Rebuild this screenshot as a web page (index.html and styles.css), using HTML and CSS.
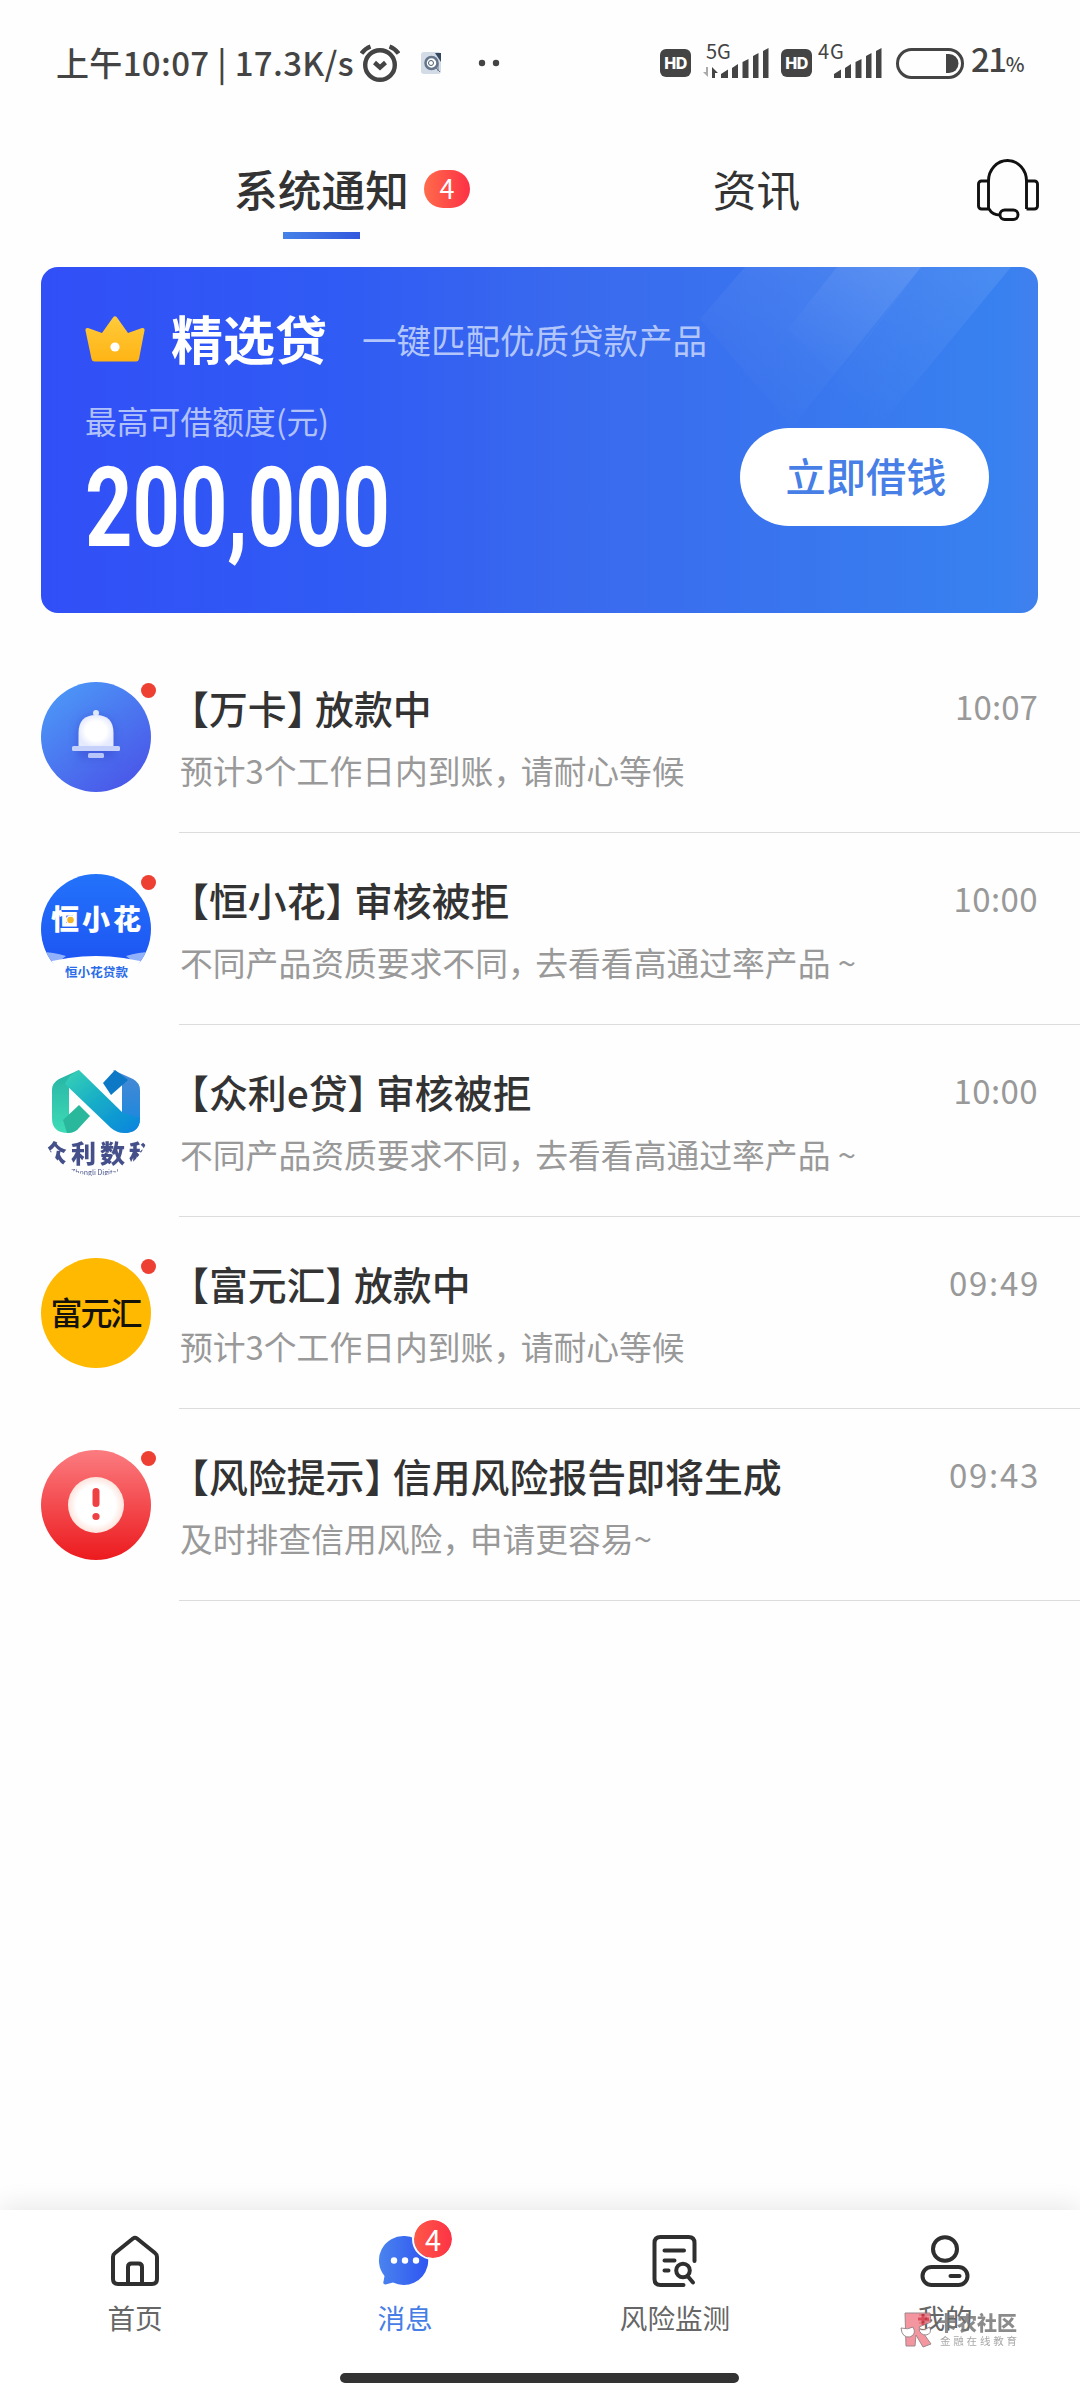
FILE: index.html
```html
<!DOCTYPE html>
<html lang="zh-CN">
<head>
<meta charset="utf-8">
<title>消息</title>
<link rel="stylesheet" href="styles.css">
</head>
<body>
<div class="screen">
  <header class="status">
    <span class="status-time">上午10:07 | 17.3K/s</span>
    <svg class="ic-alarm" width="40" height="38" viewBox="0 0 40 38" fill="none" stroke="#444" stroke-width="4.400">
      <circle cx="20" cy="21" r="14.800"/><path d="M14.500 18.500l5.500 5 5.500-5"/><path d="M1.500 9.500Q5 4.500 10.500 2.500M38.500 9.500Q35 4.500 29.500 2.500"/>
    </svg>
    <svg class="ic-app" width="21" height="22" viewBox="0 0 21 22">
      <rect width="20" height="22" rx="3" fill="#d3dbe7"/><path d="M14 1h6v9z" fill="#34475f"/><circle cx="10.500" cy="11" r="6" fill="#fff" stroke="#64748b" stroke-width="2.500"/><circle cx="10" cy="11" r="2.500" fill="none" stroke="#4a5b74"/><path d="M14 15l5 5M17 11v8" stroke="#64748b"/>
    </svg>
    <svg class="ic-dots" width="22" height="8" viewBox="0 0 22 8" fill="#444"><circle cx="4" cy="4" r="3.200"/><circle cx="18" cy="4" r="3.200"/></svg>
    <span class="hd hd-first">HD</span>
    <span class="net net-5g">5G</span>
    <svg class="bars bars-5g" width="66" height="32" viewBox="0 0 66 32" fill="#444">
      <path d="M5 20v10L0 25h3v-5z" fill="#aaa"/><path d="M9 31V20l6 6h-3v5z"/>
      <path d="M18 31v-4l7-4.500V31zM29 31V21l6-4v14zM39.500 31V15l6-3v19zM50 31V9l5.500-3v25zM60 31V4l5.500-3v30z"/>
    </svg>
    <span class="hd hd-second">HD</span>
    <span class="net net-4g">4G</span>
    <svg class="bars bars-4g" width="48" height="32" viewBox="0 0 48 32" fill="#444">
      <path d="M0 31v-4l7-4.500V31zM11 31V21l6-4v14zM21.500 31V15l6-3v19zM32 31V9l5.500-3v25zM42 31V4l5.500-3v30z"/>
    </svg>
    <svg class="battery" width="68" height="31" viewBox="0 0 68 31">
      <rect x="1.500" y="1.500" width="65" height="28" rx="14" fill="none" stroke="#444" stroke-width="3"/><path d="M50 6h3a9.500 9.500 0 0 1 0 19h-3z" fill="#444"/>
    </svg>
    <span class="pct">21<small>%</small></span>
  </header>

  <nav class="tabs">
    <div class="tab tab-on"><span class="tab-text">系统通知</span><i class="tab-line"></i><b class="tab-badge">4</b></div>
    <div class="tab"><span class="tab-text">资讯</span></div>
    <svg class="headset" width="62" height="62" viewBox="0 0 62 62" fill="none" stroke="#111" stroke-width="2.900">
      <path d="M49.500 50V22a19 20.500 0 0 0-38 0v28M49.500 50h8a3 3 0 0 0 3-3V25a3 3 0 0 0-3-3h-8"/>
      <path d="M12 22H4.500a3 3 0 0 0-3 3v22a3 3 0 0 0 3 3H12c2 3.500 6 6 11 6"/>
      <rect x="23" y="51" width="18" height="9.500" rx="4.700"/>
    </svg>
  </nav>

  <section class="banner">
    <svg class="banner-art" width="997" height="346" viewBox="0 0 997 346">
      <defs>
        <linearGradient id="ray" x1="1" y1="0" x2="0.300" y2="1"><stop offset="0" stop-color="#fff" stop-opacity=".09"/><stop offset="1" stop-color="#fff" stop-opacity="0"/></linearGradient>
      </defs>
      <path d="M704 0L659 52 751 160 880 0z" fill="url(#ray)"/>
      <path d="M796 0L747 62 796 112 880 0z" fill="url(#ray)"/>
      <path d="M880 0L781 130 838 160 970 0z" fill="url(#ray)"/>
    </svg>
    <div class="banner-head">
      <svg class="crown" width="60" height="46" viewBox="0 0 60 46">
        <defs><linearGradient id="gold" x1="0" y1="0" x2="0" y2="1"><stop offset="0" stop-color="#ffcb3b"/><stop offset="1" stop-color="#ffb414"/></linearGradient></defs>
        <path d="M28 1.500q2-2.500 4 0L43 17l14-5q3-.5 2.500 2.500L54 43q-.6 2.500-3 2.500H9.500q-2.400 0-3-2.500L.5 14.500Q0 11.500 3 12l14 5z" fill="url(#gold)"/><circle cx="30" cy="31" r="4.600" fill="#fff"/>
      </svg>
      <h1>精选贷</h1>
      <span class="slogan">一键匹配优质贷款产品</span>
    </div>
    <div class="banner-main">
      <div>
        <div class="limit-label">最高可借额度(元)</div>
        <div class="limit">200,000</div>
      </div>
      <button class="borrow">立即借钱</button>
    </div>
  </section>

  <ul class="list">
    <li class="row">
      <div class="avatar">
        <svg width="110" height="110" viewBox="0 0 110 110">
          <defs>
            <linearGradient id="bellbg" x1="0.100" y1="0.100" x2="0.800" y2="1"><stop offset="0" stop-color="#4c96f7"/><stop offset="1" stop-color="#4a55e8"/></linearGradient>
            <radialGradient id="bellw"><stop offset=".6" stop-color="#fff"/><stop offset="1" stop-color="#e6eafd"/></radialGradient>
            <filter id="glow" x="-50%" y="-50%" width="200%" height="200%"><feGaussianBlur stdDeviation="5"/></filter>
          </defs>
          <circle cx="55" cy="55" r="55" fill="url(#bellbg)"/>
          <path d="M37 69V52q0-18 18-18t18 18v24H37z" fill="#3848cf" opacity=".55" filter="url(#glow)"/>
          <circle cx="55" cy="31" r="3" fill="#dfe7fd"/>
          <path d="M37.500 65V51q0-18 17.500-18t17.500 18v14z" fill="url(#bellw)"/>
          <rect x="31" y="64" width="48" height="5" rx="1.500" fill="#c5d1fb"/><rect x="47" y="71" width="16" height="5" rx="1.500" fill="#b7c5fa"/>
        </svg>
        <i class="dot"></i>
      </div>
      <div class="body">
        <div class="line"><h2>【万卡<span class="close">】</span>放款中</h2><time class="seven">10:07</time></div>
        <p>预计3个工作日内到账<span class="comma">，</span>请耐心等候</p>
      </div>
    </li>
    <li class="row">
      <div class="avatar">
        <svg width="110" height="110" viewBox="0 0 110 110">
          <defs>
            <clipPath id="round"><circle cx="55" cy="55" r="55"/></clipPath>
            <linearGradient id="hxh" x1="0" y1="0" x2="0" y2="1"><stop offset="0" stop-color="#2373fb"/><stop offset="1" stop-color="#1d55f3"/></linearGradient>
          </defs>
          <g clip-path="url(#round)"><rect width="110" height="88" fill="url(#hxh)"/><path d="M0 78q12 0 25 4l-10 8H0zM110 78q-12 0-25 4l10 8h15z" fill="#91b2fb"/><path d="M0 90Q55 74 110 90v20H0z" fill="#fff"/></g>
          <text x="10" y="56" textLength="90" class="logo-hxh">恒小花</text>
          <circle cx="29.500" cy="46" r="4" fill="#f2b42b" stroke="#fff" stroke-width="1.500"/>
          <text x="24" y="102.500" textLength="63" class="logo-hxh-sub">恒小花贷款</text>
        </svg>
        <i class="dot"></i>
      </div>
      <div class="body">
        <div class="line"><h2>【恒小花<span class="close">】</span>审核被拒</h2><time>10:00</time></div>
        <p>不同产品资质要求不同<span class="comma">，</span>去看看高通过率产品 ~</p>
      </div>
    </li>
    <li class="row">
      <div class="avatar">
        <svg width="110" height="110" viewBox="0 0 110 110">
          <defs>
            <linearGradient id="nleft" x1="0" y1="0" x2="0" y2="1"><stop offset="0" stop-color="#27b3a5"/><stop offset="1" stop-color="#3edcb6"/></linearGradient>
            <linearGradient id="nmid" x1="0" y1="0" x2="1" y2="1"><stop offset="0" stop-color="#39d3b4"/><stop offset=".5" stop-color="#14a9c9"/><stop offset="1" stop-color="#0b82df"/></linearGradient>
            <linearGradient id="nright" x1="0" y1="0" x2="0" y2="1"><stop offset="0" stop-color="#4a89d3"/><stop offset="1" stop-color="#1488e0"/></linearGradient>
            <filter id="soft"><feGaussianBlur stdDeviation=".7"/></filter>
          </defs>
          <g filter="url(#soft)">
            <path d="M38 4L18 13q-7 4-7 11v28q0 15 16 15 6 0 10-4L28 50V22z" fill="url(#nleft)"/>
            <path d="M38 39l11 11-12 13q-4 4-11 4L22 54z" fill="#2bb89d"/>
            <path d="M72 4l20 9q7 4 7 11v28q0 15-16 15l-2-20V18z" fill="url(#nright)"/>
            <path d="M62 17L74 4l13 10-17 15z" fill="#0878c5"/>
            <path d="M38 4q-10 4-14 14l46 44q6 5 13 5 16 0 16-15L82 47z" fill="url(#nmid)"/>
          </g>
          <g clip-path="url(#round)" class="logo-zl" filter="url(#soft)">
            <text x="1" y="97" textLength="112">众利数科</text>
            <text x="30" y="109" class="logo-zl-en">Zhongli Digital</text>
          </g>
        </svg>
      </div>
      <div class="body">
        <div class="line"><h2>【众利e贷<span class="close">】</span>审核被拒</h2><time>10:00</time></div>
        <p>不同产品资质要求不同<span class="comma">，</span>去看看高通过率产品 ~</p>
      </div>
    </li>
    <li class="row">
      <div class="avatar">
        <svg width="110" height="110" viewBox="0 0 110 110">
          <circle cx="55" cy="55" r="55" fill="#ffb900"/>
          <text x="9.500" y="67" textLength="92" class="logo-fyh">富元汇</text>
        </svg>
        <i class="dot"></i>
      </div>
      <div class="body">
        <div class="line"><h2>【富元汇<span class="close">】</span>放款中</h2><time class="wide">09:49</time></div>
        <p>预计3个工作日内到账<span class="comma">，</span>请耐心等候</p>
      </div>
    </li>
    <li class="row">
      <div class="avatar">
        <svg width="110" height="110" viewBox="0 0 110 110">
          <defs>
            <linearGradient id="riskbg" x1="0" y1="0" x2="0" y2="1"><stop offset="0" stop-color="#fb7c80"/><stop offset="1" stop-color="#ec1a1e"/></linearGradient>
            <radialGradient id="riskw"><stop offset=".7" stop-color="#fff"/><stop offset="1" stop-color="#fde3dc"/></radialGradient>
          </defs>
          <circle cx="55" cy="55" r="55" fill="url(#riskbg)"/><circle cx="55" cy="55" r="28" fill="url(#riskw)"/>
          <rect x="51.500" y="38" width="7" height="19" rx="3.500" fill="#ef4143"/><circle cx="55" cy="66.500" r="3.600" fill="#ef4143"/>
        </svg>
        <i class="dot"></i>
      </div>
      <div class="body">
        <div class="line"><h2>【风险提示<span class="close">】</span>信用风险报告即将生成</h2><time class="wide">09:43</time></div>
        <p>及时排查信用风险<span class="comma">，</span>申请更容易~</p>
      </div>
    </li>
  </ul>

  <footer class="dock">
    <div class="dock-items">
      <div class="item">
        <svg width="56" height="56" viewBox="0 0 56 56" fill="none" stroke="#2f2f2f" stroke-width="4" stroke-linejoin="round">
          <path d="M26 5.500q2-1.500 4 0L48 20q2 1.500 2 4v22q0 5-5 5H11q-5 0-5-5V24q0-2.500 2-4z"/><path d="M21 51V34q0-3.500 3.500-3.500h7Q35 30.500 35 34v17"/>
        </svg>
        <span>首页</span>
      </div>
      <div class="item item-on">
        <svg width="56" height="56" viewBox="0 0 56 56">
          <defs><linearGradient id="chat"><stop offset="0" stop-color="#4a84ee"/><stop offset="1" stop-color="#2f55f2"/></linearGradient></defs>
          <path d="M28 3a24.500 24.500 0 1 1-12 46.500L8.500 51.500q-3 0-2-3L7.500 43A24.500 24.500 0 0 1 28 3z" fill="url(#chat)"/>
          <g fill="#fff"><circle cx="17" cy="27.500" r="3.200"/><circle cx="28" cy="27.500" r="3.200"/><circle cx="39" cy="27.500" r="3.200"/></g>
        </svg>
        <b class="item-badge">4</b>
        <span>消息</span>
      </div>
      <div class="item">
        <svg width="56" height="56" viewBox="0 0 56 56" fill="none" stroke="#2f2f2f" stroke-width="4" stroke-linecap="round">
          <path d="M47.500 28V10q0-6-6-6H13.500q-6 0-6 6v36q0 6 6 6h23"/><path d="M17.500 17.500h19.500M17.500 27.500h10M17.500 37.500h4"/><circle cx="36" cy="37.500" r="6.800"/><path d="M40.500 43l5.500 6.500"/>
        </svg>
        <span>风险监测</span>
      </div>
      <div class="item">
        <svg width="56" height="56" viewBox="0 0 56 56" fill="none" stroke="#2f2f2f" stroke-width="4" stroke-linecap="round">
          <ellipse cx="28" cy="16" rx="12" ry="11.800"/><rect x="5.500" y="34" width="45" height="18" rx="9"/><path d="M33.500 43h9"/>
        </svg>
        <span>我的</span>
        <div class="mark">
          <svg width="34" height="36" viewBox="0 0 34 36" stroke="#8b7377">
            <path d="M5 1h25l1 9-12 5 12 17-8 3-7-12-1 11H6z" fill="#f38490"/><path d="M23 2v11M18 7h11" stroke="#d32f3f" stroke-width="3"/>
            <path d="M1 16q7 2 12-1 4 7-3 10-8 1-9-9zM19 17q5 2 11-2 2 7-4 8-6 0-7-6z" fill="#fff"/>
          </svg>
          <div class="mark-text"><b>卡农社区</b><em>金融在线教育</em></div>
        </div>
      </div>
    </div>
    <i class="home-bar"></i>
  </footer>
</div>
</body>
</html>
```
FILE: styles.css
```css
* { box-sizing: border-box; }
body, h1, h2, p, ul { margin: 0; padding: 0; }
body { background: #fefefe; font-family: "Noto Sans CJK SC", sans-serif; color: #333; }
svg { display: block; flex: none; }
i, em { font-style: normal; }
.screen { width: 1080px; height: 2400px; display: flex; flex-direction: column; overflow: hidden; }

/* status bar */
.status { height: 126px; padding: 0 0 0 56px; display: flex; align-items: center; color: #444; white-space: nowrap; flex: none; }
.status-time { width: 304px; font-size: 33px; line-height: 48px; font-weight: 500; letter-spacing: .35px; margin-top: -3px; }
.ic-app { margin-left: 21px; }
.ic-dots { margin-left: 36px; }
.hd { width: 31px; height: 28px; border-radius: 6px; background: #444; color: #fff; font: 800 16px/28px Inter, sans-serif; text-align: center; letter-spacing: -.5px; }
.hd-first { margin-left: 160px; }
.hd-second { margin-left: 12px; }
.net { font-size: 20px; line-height: 20px; width: 28px; margin-top: -25px; }
.net-5g { margin-left: 15px; }
.net-4g { margin-left: 6px; letter-spacing: .8px; }
.bars-5g { margin-left: -31px; }
.bars-4g { margin-left: -12px; }
.battery { margin-left: 14px; }
.pct { font-size: 33px; line-height: 40px; font-weight: 500; margin-left: 7px; margin-top: -4px; letter-spacing: -1.500px; }
.pct small { font-size: 20px; letter-spacing: 0; }

/* tabs */
.tabs { height: 141px; flex: none; display: flex; align-items: flex-start; padding-left: 104px; }
.tab { position: relative; width: 435px; height: 113px; display: flex; flex-direction: column; align-items: center; font-size: 43.700px; line-height: 64px; padding-top: 30px; }
.tab-on { font-weight: 500; }
.tab-line { width: 77px; height: 7px; margin-top: 12px; background: linear-gradient(90deg, #4582e8, #3358dd); }
.tab-badge { position: absolute; left: 320px; top: 44px; width: 46px; height: 38px; border-radius: 19px; background: linear-gradient(90deg, #ff6b4b, #fd3145); color: #fff; font-size: 27px; line-height: 36px; font-weight: 400; text-align: center; }
.headset { margin: 33px 0 0 3px; }

/* banner */
.banner { position: relative; width: 997px; height: 346px; margin-left: 41px; padding: 37px 49px 0 44px; border-radius: 17px; overflow: hidden; flex: none; background: linear-gradient(90deg, #314ff7 0%, #305bf4 30%, #3969ee 52%, #3975ee 75%, #3881f0 96%, #4080ee 100%); color: #fff; }
.banner-art { position: absolute; left: 0; top: 0; }
.banner-head { position: relative; display: flex; align-items: center; height: 68px; }
.crown { margin-top: 2px; }
h1 { font-size: 52px; line-height: 68px; font-weight: 700; margin-left: 26px; }
.slogan { font-size: 34.500px; line-height: 50px; margin: 2px 0 0 35px; color: #b3c6fb; }
.banner-main { position: relative; display: flex; justify-content: space-between; align-items: flex-start; }
.limit-label { font-size: 31.800px; line-height: 46px; margin-top: 25px; color: #b1c2fb; }
.limit { font: 700 111px/100px Roboto, sans-serif; margin-top: 15px; transform: scaleX(.745); transform-origin: 0 50%; white-space: nowrap; width: 300px; }
.borrow { width: 249px; height: 98px; margin-top: 56px; border: 0; border-radius: 49px; background: #fff; color: #477fe6; font: 500 40.200px/94px "Noto Sans CJK SC", sans-serif; padding: 0 0 4px 3px; text-align: center; }

/* messages */
.list { list-style: none; margin-top: 28px; padding-left: 41px; flex: 1; }
.row { display: flex; height: 192px; }
.avatar { position: relative; width: 110px; margin-top: 41px; flex: none; }
.dot { position: absolute; left: 100px; top: 1px; width: 15px; height: 15px; border-radius: 50%; background: #ee3f33; }
.body { flex: 1; margin-left: 28px; padding: 42px 42px 0 0; border-bottom: 1px solid #dcdcdc; }
.line { display: flex; justify-content: space-between; align-items: flex-start; height: 48px; }
h2 { font-size: 38.900px; line-height: 48px; font-weight: 500; margin-left: -9px; white-space: nowrap; }
.close { letter-spacing: -10.500px; }
time { font-size: 33px; line-height: 47px; color: #999; letter-spacing: .4px; }
.seven { letter-spacing: .1px; }
.wide { letter-spacing: 1.700px; margin-right: -2px; }
.body p { font-size: 32.800px; line-height: 44px; margin-top: 17px; margin-left: 1px; color: #999; white-space: nowrap; }
.comma { letter-spacing: -5.500px; }
.logo-hxh { font-size: 28px; font-weight: 900; fill: #fff; }
.logo-hxh-sub { font-size: 12.500px; font-weight: 700; fill: #2b6de8; }
.logo-zl { font-size: 25px; font-weight: 900; fill: #45508a; }
.logo-zl-en { font-size: 7px; font-weight: 400; }
.logo-fyh { font-size: 32px; font-weight: 500; fill: #15120a; }

/* bottom navigation */
.dock { height: 190px; background: #fff; box-shadow: 0 -4px 26px rgba(0, 0, 0, .09); flex: none; display: flex; flex-direction: column; align-items: center; }
.dock-items { display: flex; width: 100%; height: 163px; }
.item { position: relative; width: 270px; padding-top: 23px; display: flex; flex-direction: column; align-items: center; font-size: 27.600px; line-height: 40px; color: #666; }
.item > span { margin-top: 8px; }
.item-on { color: #477ee6; }
.item-badge { position: absolute; left: 142px; top: 8px; width: 42px; height: 42px; border: 2px solid #fff; border-radius: 50%; background: linear-gradient(90deg, #ff5a48, #fd3145) border-box; background-clip: padding-box; color: #fff; font-size: 29px; line-height: 36px; font-weight: 400; text-align: center; }
.mark { position: absolute; left: 90px; top: 102px; display: flex; opacity: .85; white-space: nowrap; }
.mark-text { display: flex; flex-direction: column; margin-left: 3px; color: #777; }
.mark-text b { font-size: 20px; line-height: 22px; font-weight: 900; }
.mark-text em { font-size: 10.500px; line-height: 13px; letter-spacing: 2.800px; color: #999; margin-left: 3px; }
.home-bar { width: 399px; height: 10px; margin-right: 2px; border-radius: 5px; background: #333; }
```
